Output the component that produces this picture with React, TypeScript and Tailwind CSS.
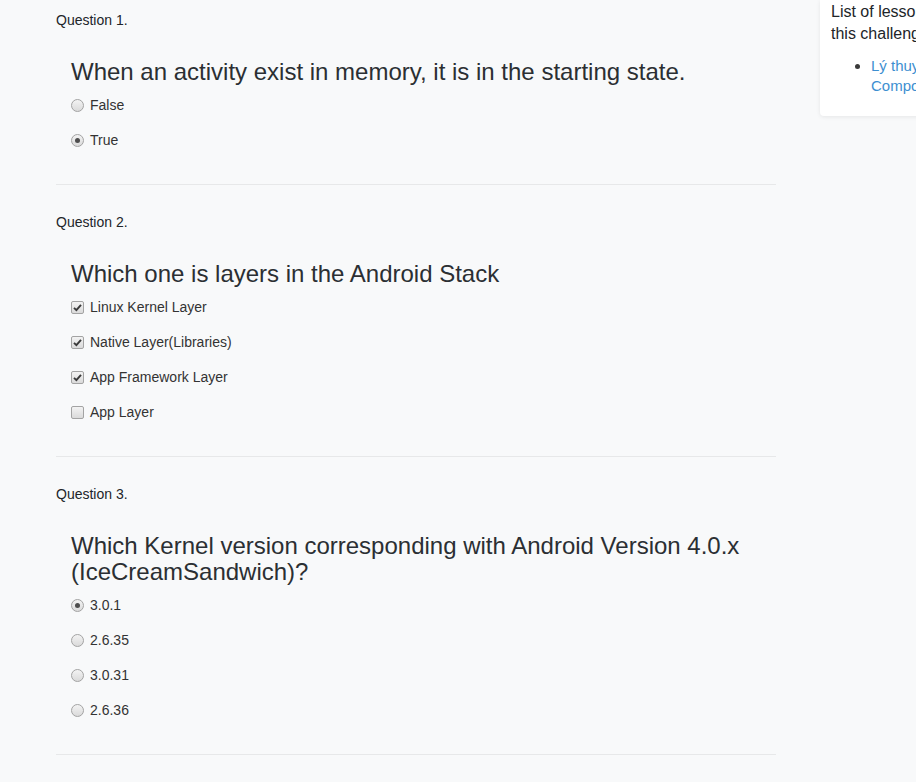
import React from 'react';

type Question = {
    label: string;
    title: string;
    kind: 'radio' | 'checkbox';
    options: { text: string; checked: boolean }[];
};

const questions: Question[] = [
    {
        label: 'Question 1.',
        title: 'When an activity exist in memory, it is in the starting state.',
        kind: 'radio',
        options: [
            { text: 'False', checked: false },
            { text: 'True', checked: true },
        ],
    },
    {
        label: 'Question 2.',
        title: 'Which one is layers in the Android Stack',
        kind: 'checkbox',
        options: [
            { text: 'Linux Kernel Layer', checked: true },
            { text: 'Native Layer(Libraries)', checked: true },
            { text: 'App Framework Layer', checked: true },
            { text: 'App Layer', checked: false },
        ],
    },
    {
        label: 'Question 3.',
        title: 'Which Kernel version corresponding with Android Version 4.0.x (IceCreamSandwich)?',
        kind: 'radio',
        options: [
            { text: '3.0.1', checked: true },
            { text: '2.6.35', checked: false },
            { text: '3.0.31', checked: false },
            { text: '2.6.36', checked: false },
        ],
    },
];

function Radio({ checked }: { checked: boolean }) {
    return (
        <span className="flex items-center justify-center w-[13px] h-[13px] rounded-full border border-[#a3a3a3] bg-gradient-to-b from-[#f3f3f3] to-[#dadada] shrink-0">
            {checked && <span className="w-[5px] h-[5px] rounded-full bg-[#4d4d4d]" />}
        </span>
    );
}

function Checkbox({ checked }: { checked: boolean }) {
    return (
        <span className="flex items-center justify-center w-[13px] h-[13px] rounded-[2px] border border-[#a3a3a3] bg-gradient-to-b from-[#f3f3f3] to-[#dadada] shrink-0">
            {checked && (
                <svg width="9" height="9" viewBox="0 0 9 9">
                    <path d="M1 4.8 L3.4 7.2 L8 1.8" fill="none" stroke="#3a3a3a" strokeWidth="1.9" />
                </svg>
            )}
        </span>
    );
}

export default function App() {
    return (
        <div className="w-[916px] h-[782px] overflow-hidden bg-[#f8f9fa] text-[#212529] font-['Liberation_Sans',Arial,sans-serif]">
            <div className="flex items-start">
                {/* Questions */}
                <div className="ml-[56px] w-[720px] shrink-0 pt-[10px]">
                    {questions.map(q => (
                        <div key={q.label} className="border-b border-[#e7e8e9] pb-[34px] mb-[27px]">
                            <p className="text-[14px] leading-[20px]">{q.label}</p>
                            <div className="pl-[15px] pr-[20px]">
                                <h4 className="mt-[29px] text-[24px] leading-[26px] text-[#2b2f33]">{q.title}</h4>
                                <div className="mt-[10px] flex flex-col gap-[15px]">
                                    {q.options.map(o => (
                                        <label key={o.text} className="flex items-center gap-[6px] text-[14px] leading-[20px] text-[#333]">
                                            {q.kind === 'radio' ? <Radio checked={o.checked} /> : <Checkbox checked={o.checked} />}
                                            <span>{o.text}</span>
                                        </label>
                                    ))}
                                </div>
                            </div>
                        </div>
                    ))}
                </div>

                {/* Lessons card */}
                <div className="ml-[44px] w-[222px] shrink-0 bg-white rounded-b-[4px] shadow-[0_1px_4px_rgba(0,0,0,0.08)] pl-[11px] pr-[11px] pt-px pb-[20px]">
                    <p className="text-[16px] leading-[22px] text-[#212529]">List of lessons related to this challenge</p>
                    <ul className="mt-[11px] pl-[40px] list-disc text-[15px] leading-[20px]">
                        <li className="text-[#3a3a3a]">
                            <span className="text-[#3d8fd1]">Lý thuyết Android Components</span>
                        </li>
                    </ul>
                </div>
            </div>
        </div>
    );
}
